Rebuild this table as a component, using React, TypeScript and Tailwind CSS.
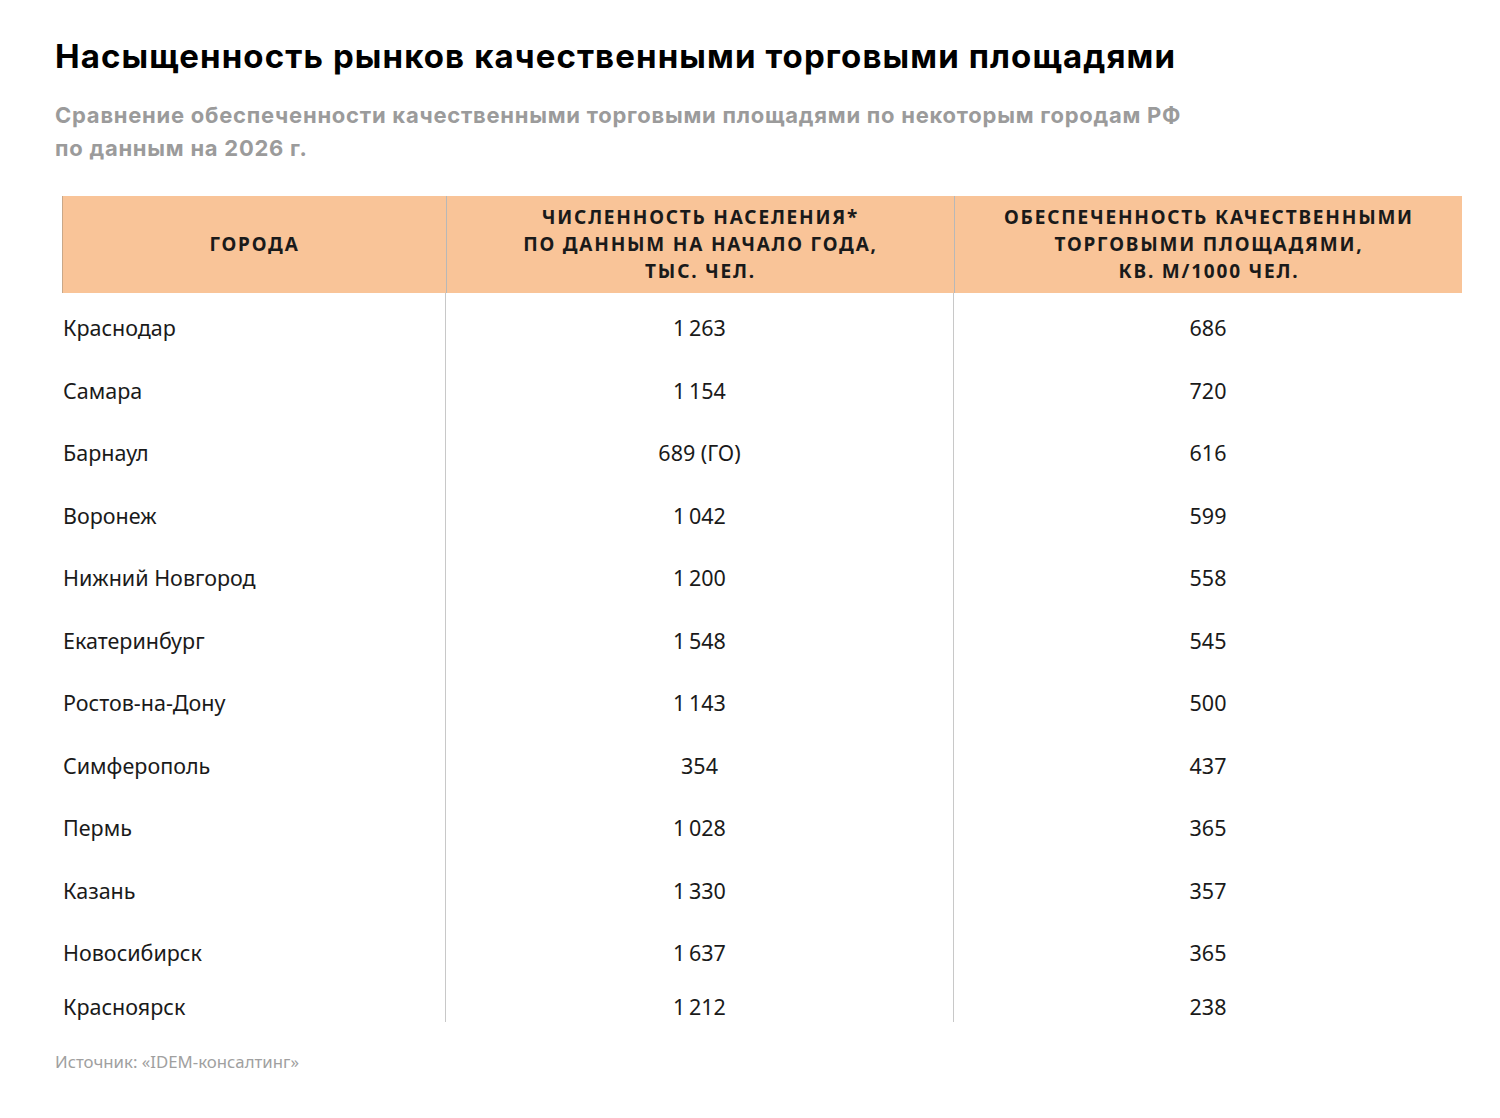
import React from "react";

const rows: [string, string, string][] = [
  ["Краснодар", "1\u2009263", "686"],
  ["Самара", "1\u2009154", "720"],
  ["Барнаул", "689 (ГО)", "616"],
  ["Воронеж", "1\u2009042", "599"],
  ["Нижний Новгород", "1\u2009200", "558"],
  ["Екатеринбург", "1\u2009548", "545"],
  ["Ростов-на-Дону", "1\u2009143", "500"],
  ["Симферополь", "354", "437"],
  ["Пермь", "1\u2009028", "365"],
  ["Казань", "1\u2009330", "357"],
  ["Новосибирск", "1\u2009637", "365"],
  ["Красноярск", "1\u2009212", "238"],
];

export default function App() {
  return (
    <div className="w-[1500px] h-[1118px] bg-white pl-[55px] pt-[36px] text-[#1a1a1a]">
      <h1 className="text-[33px] leading-[40px] font-bold text-black font-['Inter',sans-serif] tracking-[1.1px]">
        Насыщенность рынков качественными торговыми площадями
      </h1>
      <p className="mt-[23px] text-[22px] leading-[33px] font-bold text-[#9b9b9b] font-['Inter',sans-serif] tracking-[0.75px]">
        Сравнение обеспеченности качественными торговыми площадями по некоторым городам РФ
        <br />
        по данным на 2026 г.
      </p>
      <div className="ml-[7px] mt-[31px] w-[1400px] font-['Noto_Sans',sans-serif]">
        <div className="grid grid-cols-[383px_508px_509px] h-[97px] bg-[#f9c498] border-l border-[#c9a888]">
          <div className="flex items-center justify-center text-[19px] leading-[27px] font-bold tracking-[1.8px] text-center">
            ГОРОДА
          </div>
          <div className="flex items-center justify-center text-[19px] leading-[27px] font-bold tracking-[1.8px] text-center border-l border-[#b8b8b8]">
            ЧИСЛЕННОСТЬ НАСЕЛЕНИЯ*
            <br />
            ПО ДАННЫМ НА НАЧАЛО ГОДА,
            <br />
            ТЫС. ЧЕЛ.
          </div>
          <div className="flex items-center justify-center text-[19px] leading-[27px] font-bold tracking-[1.8px] text-center border-l border-[#b8b8b8]">
            ОБЕСПЕЧЕННОСТЬ КАЧЕСТВЕННЫМИ
            <br />
            ТОРГОВЫМИ ПЛОЩАДЯМИ,
            <br />
            КВ. М/1000 ЧЕЛ.
          </div>
        </div>
        <div className="grid grid-cols-[383px_508px_509px]">
          {rows.map((r, i) => {
            const last = i === rows.length - 1;
            const pad = last ? "pt-[11.5px] pb-0" : "pt-[20px] pb-[12.5px]";
            return (
              <React.Fragment key={i}>
                <div className={`${pad} pl-px text-[21.5px] leading-[30px]`}>{r[0]}</div>
                <div className={`${pad} text-center text-[21.5px] leading-[30px] border-l border-[#c8c8c8]`}>{r[1]}</div>
                <div className={`${pad} text-center text-[21.5px] leading-[30px] border-l border-[#c8c8c8]`}>{r[2]}</div>
              </React.Fragment>
            );
          })}
        </div>
      </div>
      <div className="mt-[29px] text-[16.8px] leading-[22px] text-[#a0a0a0] font-['Noto_Sans',sans-serif]">
        Источник: «IDEM-консалтинг»
      </div>
    </div>
  );
}
